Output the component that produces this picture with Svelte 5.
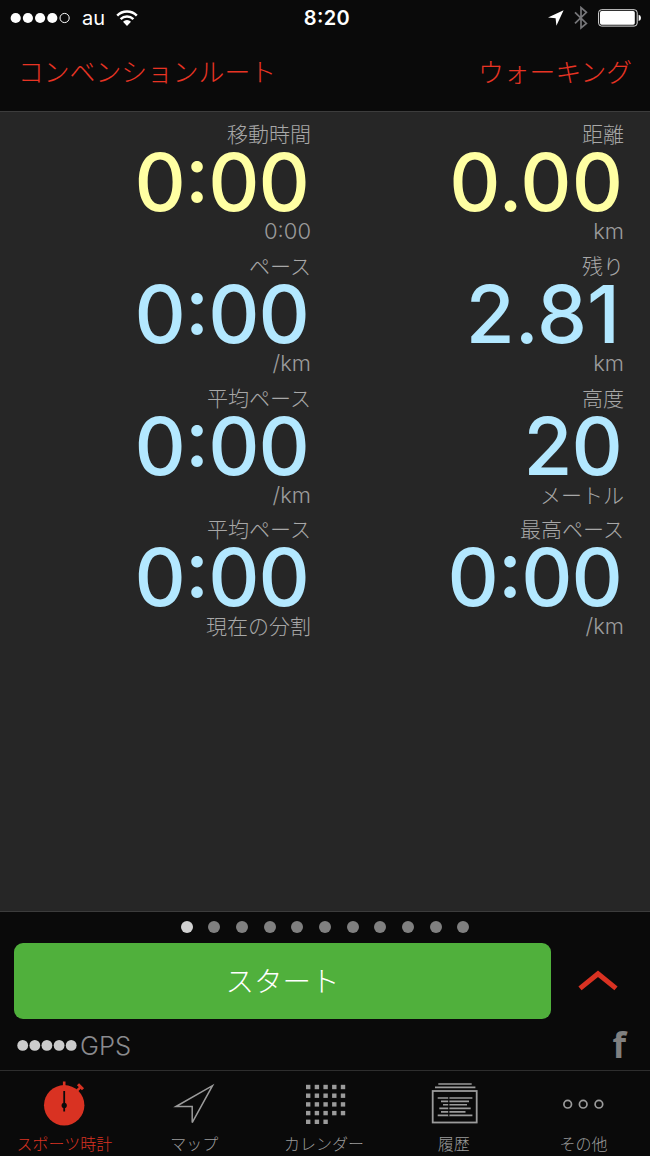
<script lang="ts">
  type Metric = { label: string; value: string; unit: string; accent?: boolean };

  const metrics: Metric[] = [
    { label: '移動時間', value: '0:00', unit: '0:00', accent: true },
    { label: '距離', value: '0.00', unit: 'km', accent: true },
    { label: 'ペース', value: '0:00', unit: '/km' },
    { label: '残り', value: '2.81', unit: 'km' },
    { label: '平均ペース', value: '0:00', unit: '/km' },
    { label: '高度', value: '20', unit: 'メートル' },
    { label: '平均ペース', value: '0:00', unit: '現在の分割' },
    { label: '最高ペース', value: '0:00', unit: '/km' }
  ];

  const tabs = [
    { id: 'stopwatch', label: 'スポーツ時計' },
    { id: 'map', label: 'マップ' },
    { id: 'calendar', label: 'カレンダー' },
    { id: 'history', label: '履歴' },
    { id: 'more', label: 'その他' }
  ];

  // 5 x 5 grid, the last week is only three days long
  const days = Array.from({ length: 23 }, (_, i) => ({ x: 12 + (i % 5) * 8.7, y: 5.8 + Math.floor(i / 5) * 8.7 }));

  const pageCount = 11;
  let page = $state(0);
  let activeTab = $state('stopwatch');
</script>

<div class="screen">
  <header>
    <div class="status-bar">
      <div class="carrier">
        <svg width="61" height="12" viewBox="0 0 61 12" aria-hidden="true">
          {#each [5.7, 17.9, 30.1, 42.3] as cx}
            <circle {cx} cy="6" r="5.1" fill="#fff" />
          {/each}
          <circle cx="54.6" cy="6" r="4.6" fill="none" stroke="#fff" stroke-width="1" />
        </svg>
        <span class="carrier-name">au</span>
        <svg class="wifi" width="22" height="17" viewBox="0 0 22 17" aria-hidden="true">
          <g fill="none" stroke="#fff" stroke-width="2.5">
            <path d="M1.2 5.6a14 14 0 0 1 19.6 0" />
            <path d="M4.6 9.2a9.2 9.2 0 0 1 12.8 0" />
          </g>
          <path d="M7 11.7a5.8 5.8 0 0 1 8 0l-4 4.4z" fill="#fff" />
        </svg>
      </div>
      <span class="clock">8:20</span>
      <div class="indicators">
        <svg width="16" height="16" viewBox="0 0 16 16" aria-hidden="true">
          <path d="M15.6 .3 0 7.6l7.6.6.8 7.5z" fill="#fff" />
        </svg>
        <svg class="bluetooth" width="14" height="24" viewBox="0 0 14 24" aria-hidden="true">
          <path d="M1 6.4l11.4 11L7 22V1.6l5.4 4.8L1 17.4" fill="none" stroke="#77777a" stroke-width="1.7" />
        </svg>
        <svg class="battery" width="44" height="18" viewBox="0 0 44 18" aria-hidden="true">
          <rect x=".6" y=".7" width="38.6" height="16.4" rx="3" fill="none" stroke="#ddd" stroke-width="1" />
          <rect x="2" y="2.1" width="34.8" height="13.6" rx="1.6" fill="#fff" />
          <path d="M40.6 5.7q2.4.5 2.4 3.2t-2.4 3.2z" fill="#fff" />
        </svg>
      </div>
    </div>
    <nav class="nav-bar">
      <button type="button">コンベンションルート</button>
      <button type="button">ウォーキング</button>
    </nav>
  </header>

  <main>
    {#each metrics as metric}
      <section class="metric" class:accent={metric.accent}>
        <div class="caption">{metric.label}</div>
        <div
          class="value"
          class:decimal={metric.value.includes('.')}
          class:ends-in-one={metric.value.endsWith('1')}
        >
          {metric.value}
        </div>
        <div class="caption unit" class:latin={/^[\x20-\x7e]+$/.test(metric.unit)}>{metric.unit}</div>
      </section>
    {/each}
  </main>

  <div class="controls">
    <div class="pager">
      {#each Array(pageCount) as _, i}
        <button type="button" class:current={i === page} aria-label="{i + 1}" onclick={() => (page = i)}></button>
      {/each}
    </div>
    <div class="start-row">
      <button type="button" class="start">スタート</button>
      <svg class="chevron" width="40" height="22" viewBox="0 0 40 22" aria-hidden="true">
        <polyline points="2,18.4 20,3.7 38,18.4" fill="none" stroke="#d93222" stroke-width="5" />
      </svg>
    </div>
    <div class="gps-row">
      <div class="gps">
        <svg width="61" height="12" viewBox="0 0 61 12" aria-hidden="true">
          {#each [5.7, 17.8, 29.9, 42.1, 54.2] as cx}
            <circle {cx} cy="6.4" r="5.4" fill="#ccc" />
          {/each}
        </svg>
        <span>GPS</span>
      </div>
      <span class="facebook">f</span>
    </div>
  </div>

  <nav class="tab-bar">
    {#each tabs as tab}
      <button type="button" class="tab" class:active={tab.id === activeTab} onclick={() => (activeTab = tab.id)}>
        <svg width="60" height="50" viewBox="0 0 60 50" aria-hidden="true">
          {#if tab.id === 'stopwatch'}
            <circle cx="29.2" cy="26.3" r="20.2" fill="currentColor" />
            <path d="M29.2 2.5v6M41.8 11.8l4-4" stroke="currentColor" stroke-width="2.6" />
            <path d="M43 5.2l5 5" stroke="currentColor" stroke-width="3" />
            <path d="M29.2 12v20.5" stroke="#0a0a0a" stroke-width="1.8" />
            <circle cx="29.2" cy="26.4" r="2.6" fill="#0a0a0a" />
          {:else if tab.id === 'map'}
            <path d="M11 27.5 47.5 6.6 27.2 43.6V27.5z" fill="none" stroke="currentColor" stroke-width="1.5" />
          {:else if tab.id === 'calendar'}
            {#each days as day}
              <rect x={day.x} y={day.y} width="4.4" height="4.4" fill="currentColor" />
            {/each}
          {:else if tab.id === 'history'}
            <path d="M14.3 5h33.4M11 8.4h40.4" stroke="currentColor" stroke-width="1.6" />
            <rect x="8.7" y="12" width="44" height="31.5" fill="none" stroke="currentColor" stroke-width="1.8" />
            <path
              d="M13.7 19h34.7M17 22.4h28M19 25.8h24M15.3 29.4h31.4M17 32.9h24.5M13.7 36.4h34.7"
              stroke="currentColor"
              stroke-width="1.6"
            />
            <path d="M24.8 17.6v20" stroke="#0a0a0a" stroke-width="1.2" />
          {:else}
            {#each [13.7, 29.2, 44.9] as cx}
              <circle {cx} cy="25.2" r="3.8" fill="none" stroke="currentColor" stroke-width="1.7" />
            {/each}
          {/if}
        </svg>
        <span>{tab.label}</span>
      </button>
    {/each}
  </nav>
</div>

<style>
  :global(body) {
    background: #0a0a0a;
  }

  .screen {
    display: flex;
    flex-direction: column;
    box-sizing: border-box;
    width: 650px;
    height: 1156px;
    background: #0a0a0a;
    color: #9b9b9b;
    font-family: Inter, 'Noto Sans CJK JP', sans-serif;
    font-weight: 300;
    overflow: hidden;
  }

  button {
    padding: 0;
    border: 0;
    background: none;
    color: inherit;
    font: inherit;
    cursor: pointer;
  }

  svg {
    display: block;
    flex: none;
  }

  header {
    flex: none;
    box-sizing: border-box;
    height: 112px;
    border-bottom: 1px solid #3c3c3c;
  }

  .status-bar {
    display: grid;
    grid-template-columns: 1fr auto 1fr;
    align-items: center;
    height: 36px;
    padding: 0 8px 0 10px;
    color: #fff;
  }

  .carrier,
  .indicators {
    display: flex;
    align-items: center;
  }

  .carrier-name {
    margin: 0 11px;
    font-size: 20px;
    font-weight: 400;
  }

  .clock {
    padding-left: 2px;
    font-size: 20px;
    font-weight: 600;
    font-feature-settings: 'calt' 1, 'case' 1;
    letter-spacing: 0.4px;
  }

  .indicators {
    justify-content: flex-end;
  }

  .bluetooth {
    margin: 0 10px;
  }

  .nav-bar {
    display: flex;
    justify-content: space-between;
    align-items: center;
    height: 68px;
    padding: 0 18px;
    color: #e83424;
    font-size: 25.8px;
  }

  main {
    flex: none;
    display: grid;
    grid-template-columns: 311px 313px;
    grid-auto-rows: 122px;
    row-gap: 9.8px;
    box-sizing: border-box;
    height: 799px;
    padding-top: 10px;
    background: #262626;
  }

  .metric {
    text-align: right;
  }

  .caption {
    height: 24px;
    color: #a8a8a8;
    font-size: 21px;
    line-height: 26px;
    white-space: nowrap;
  }

  .unit {
    line-height: 24px;
  }

  .unit.latin {
    color: #9b9b9b;
    font-size: 22px;
    font-weight: 350;
    line-height: 23px;
  }

  .value {
    height: 74px;
    padding-right: 2px;
    color: #b3e8ff;
    font-size: 79.5px;
    font-weight: 500;
    font-feature-settings: 'calt' 1, 'case' 1;
    letter-spacing: -0.9px;
    line-height: 73px;
  }

  .value.decimal {
    padding-right: 1px;
    letter-spacing: 0;
  }

  /* the narrow 1 keeps the side bearing of a full-width figure */
  .value.ends-in-one {
    padding-right: 4px;
  }

  .accent .value {
    color: #ffffa3;
  }

  .controls {
    flex: none;
    box-sizing: border-box;
    height: 159px;
    border-top: 1px solid #3c3c3c;
  }

  .pager {
    display: flex;
    justify-content: center;
    gap: 15.7px;
    padding-top: 9px;
  }

  .pager button {
    width: 12px;
    height: 12px;
    border-radius: 50%;
    background: #808080;
  }

  .pager button.current {
    background: #d2d2d2;
  }

  .start-row {
    display: flex;
    align-items: center;
    gap: 27px;
    padding: 10px 14px 0;
  }

  .start {
    box-sizing: border-box;
    width: 537px;
    height: 76px;
    padding-bottom: 4px;
    border-radius: 9px;
    background: #50b03c;
    color: #fff;
    font-size: 28.5px;
  }

  .gps-row {
    display: flex;
    justify-content: space-between;
    align-items: center;
    height: 52px;
    padding: 0 24px 0 17px;
  }

  .gps {
    display: flex;
    align-items: center;
    gap: 2px;
    color: #8a8a8e;
    font-size: 25.5px;
  }

  .facebook {
    color: #808080;
    font-family: 'Open Sans', sans-serif;
    font-size: 35px;
    font-weight: 700;
    line-height: 52px;
  }

  .tab-bar {
    flex: 1;
    display: grid;
    grid-template-columns: repeat(5, 1fr);
    padding-right: 1px;
    border-top: 1px solid #2e2e2e;
  }

  .tab {
    display: flex;
    flex-direction: column;
    align-items: center;
    padding-top: 8px;
    font-size: 16px;
    line-height: 20px;
  }

  .tab span {
    margin-top: 5px;
    padding-right: 1px;
  }

  .tab.active {
    color: #d93222;
  }
</style>
